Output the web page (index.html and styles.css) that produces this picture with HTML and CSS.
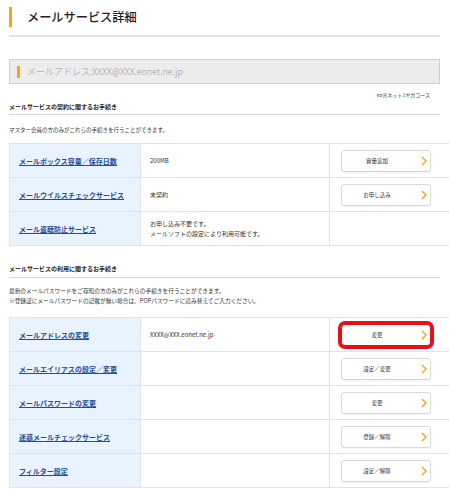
FILE: index.html
```html
<!DOCTYPE html>
<html lang="ja">
<head>
<meta charset="utf-8">
<title>メールサービス詳細</title>
<link rel="stylesheet" href="styles.css">
</head>
<body>
<div class="page">
  <header class="page-head">
    <h1 class="page-title">メールサービス詳細</h1>
  </header>

  <div class="address-box">
    <span class="address-mark"></span>
    <span class="address-text">メールアドレス:XXXX@XXX.eonet.ne.jp</span>
  </div>

  <p class="course">eo光ネット1ギガコース</p>

  <h2 class="section-title">メールサービスの契約に関するお手続き</h2>
  <p class="note note-first">マスター会員の方のみがこれらの手続きを行うことができます。</p>

  <table class="svc-table">
    <tr>
      <th><a href="#">メールボックス容量／保存日数</a></th>
      <td class="val">200MB</td>
      <td class="act"><a class="btn" href="#"><span class="btn-label">容量追加</span><svg class="chev" viewBox="0 0 6 10"><polyline points="1,1 5,5 1,9"/></svg></a></td>
    </tr>
    <tr>
      <th><a href="#">メールウイルスチェックサービス</a></th>
      <td class="val">未契約</td>
      <td class="act"><a class="btn" href="#"><span class="btn-label">お申し込み</span><svg class="chev" viewBox="0 0 6 10"><polyline points="1,1 5,5 1,9"/></svg></a></td>
    </tr>
    <tr>
      <th><a href="#">メール盗聴防止サービス</a></th>
      <td class="val">お申し込み不要です。<br>メールソフトの設定により利用可能です。</td>
      <td class="act"></td>
    </tr>
  </table>

  <h2 class="section-title section-two">メールサービスの利用に関するお手続き</h2>
  <p class="note note-second">最新のメールパスワードをご存知の方のみがこれらの手続きを行うことができます。<br>※登録証にメールパスワードの記載が無い場合は、POPパスワードに読み替えてご入力ください。</p>

  <table class="svc-table svc-table-two">
    <tr>
      <th><a href="#">メールアドレスの変更</a></th>
      <td class="val">XXXX@XXX.eonet.ne.jp</td>
      <td class="act"><a class="btn btn-hl" href="#"><span class="btn-label">変更</span><svg class="chev" viewBox="0 0 6 10"><polyline points="1,1 5,5 1,9"/></svg></a></td>
    </tr>
    <tr>
      <th><a href="#">メールエイリアスの設定／変更</a></th>
      <td class="val"></td>
      <td class="act"><a class="btn" href="#"><span class="btn-label">設定／変更</span><svg class="chev" viewBox="0 0 6 10"><polyline points="1,1 5,5 1,9"/></svg></a></td>
    </tr>
    <tr>
      <th><a href="#">メールパスワードの変更</a></th>
      <td class="val"></td>
      <td class="act"><a class="btn" href="#"><span class="btn-label">変更</span><svg class="chev" viewBox="0 0 6 10"><polyline points="1,1 5,5 1,9"/></svg></a></td>
    </tr>
    <tr>
      <th><a href="#">迷惑メールチェックサービス</a></th>
      <td class="val"></td>
      <td class="act"><a class="btn" href="#"><span class="btn-label">登録／解除</span><svg class="chev" viewBox="0 0 6 10"><polyline points="1,1 5,5 1,9"/></svg></a></td>
    </tr>
    <tr>
      <th><a href="#">フィルター設定</a></th>
      <td class="val"></td>
      <td class="act"><a class="btn" href="#"><span class="btn-label">設定／解除</span><svg class="chev" viewBox="0 0 6 10"><polyline points="1,1 5,5 1,9"/></svg></a></td>
    </tr>
  </table>
</div>
</body>
</html>
```

FILE: styles.css
```css
html, body {
  margin: 0;
  padding: 0;
  background: #fff;
}

body {
  font-family: "Noto Sans CJK JP", "Noto Sans", sans-serif;
  color: #333;
}

.page {
  width: 431px;
  padding: 0 9px;
}

.page-head {
  padding: 7px 0 8px;
  border-bottom: 2px solid #e4e4e4;
}

.page-title {
  margin: 0;
  height: 20px;
  line-height: 20px;
  border-left: 3px solid #f5a30f;
  padding-left: 15px;
  font-size: 12.2px;
  font-weight: 500;
  color: #222;
}

.address-box {
  margin-top: 22px;
  height: 23px;
  border: 1px solid #cfcfcf;
  background: #ececec;
  display: flex;
  align-items: center;
  padding-left: 7px;
}

.address-mark {
  width: 3px;
  height: 12px;
  background: #f5a30f;
  margin-right: 7px;
}

.address-text {
  font-size: 9px;
  font-weight: 300;
  color: #999;
}

.course {
  margin: 6px 0 0;
  height: 10px;
  line-height: 10px;
  text-align: right;
  padding-right: 10px;
  font-size: 5px;
  color: #444;
}

.section-title {
  margin: 0;
  height: 14px;
  line-height: 14px;
  border-bottom: 1px solid #d8d8d8;
  font-size: 6px;
  font-weight: 700;
  color: #222;
}

.section-two {
  margin-top: 16px;
  height: 15px;
}

.note {
  margin: 10px 0 0;
  line-height: 10px;
  font-size: 5.5px;
  color: #333;
}

.note-second {
  margin-top: 8px;
  font-size: 5.7px;
}

.svc-table {
  margin-top: 8px;
  width: 431px;
  border-collapse: collapse;
  table-layout: fixed;
}

.svc-table-two {
  margin-top: 11px;
}

.svc-table th,
.svc-table td {
  height: 33px;
  padding: 0;
  border: 1px solid #e3e3e3;
  vertical-align: middle;
  text-align: left;
  font-size: 6px;
  line-height: 10px;
}

.svc-table th {
  width: 121px;
  padding-left: 9px;
  background: #e9f3fd;
  font-size: 7px;
}

.svc-table th a {
  font-size: 7px;
  font-weight: 700;
  color: #1f4e9e;
  text-decoration: underline;
}

.svc-table td.val {
  width: 179px;
  padding-left: 9px;
  color: #333;
}

.svc-table td.act {
  width: 113px;
  padding-left: 11px;
}

.btn {
  box-sizing: border-box;
  width: 90px;
  height: 22px;
  border: 1px solid #d9d9d9;
  border-radius: 3px;
  background: #fff;
  box-shadow: 0 1px 1px rgba(0, 0, 0, 0.05);
  display: flex;
  align-items: center;
  text-decoration: none;
  color: #333;
}

.btn-label {
  flex: 1;
  text-align: center;
  font-size: 5.5px;
  padding-left: 3px;
}

.chev {
  width: 6px;
  height: 10px;
  margin: 0 3px 0 12px;
  fill: none;
  stroke: #f2a20c;
  stroke-width: 1.3;
}

.btn-hl {
  box-shadow: 0 0 0 3px #e5101a;
  border-color: #e5101a;
  border-radius: 4px;
}
```
